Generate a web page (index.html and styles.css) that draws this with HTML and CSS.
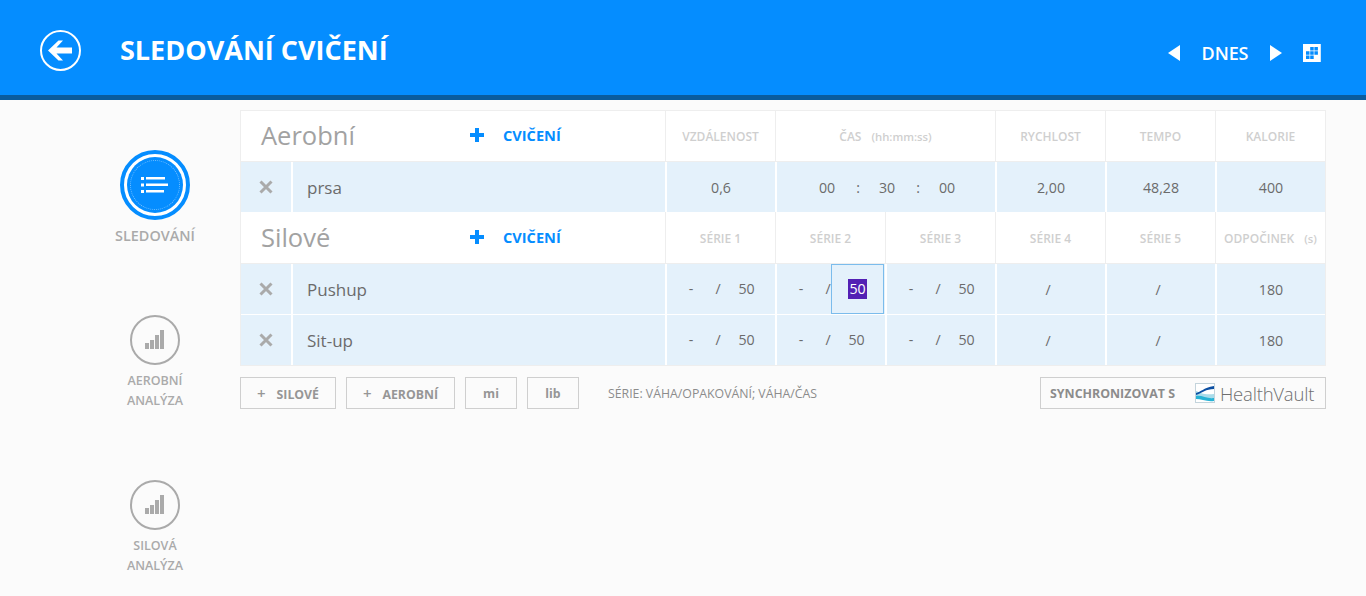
FILE: index.html
```html
<!DOCTYPE html>
<html lang="en">
<head>
  <meta charset="UTF-8" />
  <title>Sledování cvičení</title>
  <link rel="stylesheet" href="styles.css">
</head>
<body>
  <header class="topbar">
    <svg class="back-icon" width="41" height="41" viewBox="0 0 41 41">
      <circle cx="20.500" cy="20.500" r="19.500" fill="none" stroke="#fff" stroke-width="2"/>
      <path d="M8 20.500 L18.500 10.500 L23 10.500 L16.500 17.500 L32 17.500 L32 23.500 L16.500 23.500 L23 30.500 L18.500 30.500 Z" fill="#fff"/>
    </svg>
    <h1 class="title">SLEDOVÁNÍ CVIČENÍ</h1>
    <nav class="date-nav">
      <span class="tri tri-left"></span>
      <span class="today">DNES</span>
      <span class="tri tri-right"></span>
      <svg class="cal-icon" width="18" height="18" viewBox="0 0 18 18">
        <rect width="18" height="18" fill="#fff"/>
        <rect x="17" width="1" height="18" fill="#cfe6fb"/>
        <path d="M7.200 3h3.500v3.500H7.200zM11.400 3h3.500v3.500h-3.500zM3 7.200h3.500v3.500H3zM7.200 7.200h3.500v3.500H7.200zM11.400 7.200h3.500v3.500h-3.500zM3 11.400h3.500v3.500H3zM7.200 11.400h3.500v3.500H7.200z" fill="#058dff"/>
      </svg>
    </nav>
  </header>

  <div class="page">
    <aside class="sidebar">
      <div class="side-item side-active">
        <div class="active-ring">
          <div class="active-disc">
            <svg width="28" height="18" viewBox="0 0 28 18">
              <path d="M0 1h3v3H0zM0 7.500h3v3H0zM0 14h3v3H0z" fill="#fff"/>
              <path d="M5 1h19v2.500H5zM5 7.500h22V10H5zM5 14h18v2.500H5z" fill="#fff"/>
            </svg>
          </div>
        </div>
        <div class="side-label">SLEDOVÁNÍ</div>
      </div>
      <div class="side-item side-next">
        <div class="side-circle">
          <svg width="20" height="20" viewBox="0 0 20 20">
            <path d="M0 13h4v6H0zM5 10h4v9H5zM10 5h4v14h-4zM15 0h4v19h-4z" fill="#aaa"/>
          </svg>
        </div>
        <div class="side-label">AEROBNÍ<br>ANALÝZA</div>
      </div>
      <div class="side-item side-next">
        <div class="side-circle">
          <svg width="20" height="20" viewBox="0 0 20 20">
            <path d="M0 13h4v6H0zM5 10h4v9H5zM10 5h4v14h-4zM15 0h4v19h-4z" fill="#aaa"/>
          </svg>
        </div>
        <div class="side-label">SILOVÁ<br>ANALÝZA</div>
      </div>
    </aside>

    <main class="content">
      <div class="grid">
        <!-- aerobni -->
        <div class="head-name span2">
          <span class="section">Aerobní</span>
          <span class="add">
            <svg class="plus" width="14" height="14" viewBox="0 0 14 14"><path d="M5 0h4v5h5v4H9v5H5V9H0V5h5z" fill="#058dff"/></svg>CVIČENÍ
          </span>
        </div>
        <div class="th">VZDÁLENOST</div>
        <div class="th span2">ČAS <small class="th-note">(hh:mm:ss)</small></div>
        <div class="th">RYCHLOST</div>
        <div class="th">TEMPO</div>
        <div class="th">KALORIE</div>

        <div class="td td-x"><svg width="14" height="14" viewBox="0 0 14 14"><path d="M1.500 1.500l11 11M12.500 1.500l-11 11" stroke="#aaa" stroke-width="3" fill="none"/></svg></div>
        <div class="td td-name">prsa</div>
        <div class="td">0,6</div>
        <div class="td span2 time">
          <span>00</span><span>:</span><span>30</span><span>:</span><span>00</span>
        </div>
        <div class="td">2,00</div>
        <div class="td">48,28</div>
        <div class="td">400</div>

        <!-- silove -->
        <div class="head-name span2 lower">
          <span class="section">Silové</span>
          <span class="add">
            <svg class="plus" width="14" height="14" viewBox="0 0 14 14"><path d="M5 0h4v5h5v4H9v5H5V9H0V5h5z" fill="#058dff"/></svg>CVIČENÍ
          </span>
        </div>
        <div class="th lower">SÉRIE 1</div>
        <div class="th lower">SÉRIE 2</div>
        <div class="th lower">SÉRIE 3</div>
        <div class="th lower">SÉRIE 4</div>
        <div class="th lower">SÉRIE 5</div>
        <div class="th lower">ODPOČINEK <small class="th-note">(s)</small></div>

        <div class="td td-x split"><svg width="14" height="14" viewBox="0 0 14 14"><path d="M1.500 1.500l11 11M12.500 1.500l-11 11" stroke="#aaa" stroke-width="3" fill="none"/></svg></div>
        <div class="td td-name split">Pushup</div>
        <div class="td set split"><span>-</span><span>/</span><span class="val">50</span></div>
        <div class="td set split"><span>-</span><span>/</span><span class="focused"><span class="selected">50</span></span></div>
        <div class="td set split"><span>-</span><span>/</span><span class="val">50</span></div>
        <div class="td slash split">/</div>
        <div class="td slash split">/</div>
        <div class="td split">180</div>

        <div class="td td-x"><svg width="14" height="14" viewBox="0 0 14 14"><path d="M1.500 1.500l11 11M12.500 1.500l-11 11" stroke="#aaa" stroke-width="3" fill="none"/></svg></div>
        <div class="td td-name">Sit-up</div>
        <div class="td set"><span>-</span><span>/</span><span class="val">50</span></div>
        <div class="td set"><span>-</span><span>/</span><span class="val">50</span></div>
        <div class="td set"><span>-</span><span>/</span><span class="val">50</span></div>
        <div class="td slash">/</div>
        <div class="td slash">/</div>
        <div class="td">180</div>
      </div>

      <div class="toolbar">
        <button class="btn btn-silove"><span class="btn-plus">+</span>SILOVÉ</button>
        <button class="btn btn-aerobni"><span class="btn-plus">+</span>AEROBNÍ</button>
        <button class="btn btn-unit">mi</button>
        <button class="btn btn-unit">lib</button>
        <span class="hint">SÉRIE: VÁHA/OPAKOVÁNÍ; VÁHA/ČAS</span>
        <div class="sync">
          <span class="sync-label">SYNCHRONIZOVAT S</span>
          <svg class="hv-logo" width="20" height="20" viewBox="0 0 20 20">
            <rect x="0.500" y="0.500" width="19" height="19" fill="#fff" stroke="#c4d4dc"/>
            <path d="M1 8C6 10 9 12 19 11V15C10 17 6 14 1 13Z" fill="#a9dcea"/>
            <path d="M1 13C7 12 12 16 19 15V18C12 19 6 16 1 16Z" fill="#27b3d6"/>
            <path d="M1 10C6 9 8 5 19 3V6C11 6 7 10 1 12Z" fill="#0b4ea2"/>
          </svg>
          <span class="hv-name">HealthVault</span>
        </div>
      </div>
    </main>
  </div>
</body>
</html>
```

FILE: styles.css
```css
* {
  box-sizing: border-box;
}

html, body {
  height: 100%;
}

body {
  margin: 0;
  background: #fbfbfb;
  font-family: "Open Sans", "Noto Sans", "Liberation Sans", sans-serif;
  overflow: hidden;
}

.topbar {
  height: 100px;
  background: #058dff;
  border-bottom: 5px solid #0a5c9e;
  display: flex;
  align-items: center;
  padding: 6px 45px 0 40px;
  color: #fff;
}

.back-icon {
  margin-right: 39px;
}

.title {
  margin: -2px 0 0;
  font-size: 27px;
  font-weight: 700;
}

.date-nav {
  margin-left: auto;
  display: flex;
  align-items: center;
  margin-top: 4px;
}

.tri {
  width: 0;
  height: 0;
  border-top: 8px solid transparent;
  border-bottom: 8px solid transparent;
}

.tri-left {
  border-right: 12px solid #fff;
}

.tri-right {
  border-left: 12px solid #fff;
}

.today {
  width: 90px;
  text-align: center;
  font-size: 18px;
  font-weight: 600;
  letter-spacing: -0.1px;
}

.cal-icon {
  margin-left: 21px;
}

.page {
  display: flex;
}

.sidebar {
  width: 240px;
  flex: none;
  padding-left: 70px;
  text-align: center;
}

.side-item {
  display: flex;
  flex-direction: column;
  align-items: center;
}

.side-active {
  margin-top: 50px;
}

.side-next {
  margin-top: 69px;
}

.active-ring {
  width: 70px;
  height: 70px;
  border-radius: 50%;
  border: 4px solid #058dff;
  padding: 3px;
  background: #fff;
}

.active-disc {
  width: 56px;
  height: 56px;
  border-radius: 50%;
  background: #058dff;
  display: flex;
  align-items: center;
  justify-content: center;
  position: relative;
}

.active-disc::after {
  content: "";
  position: absolute;
  inset: 3px;
  border-radius: 50%;
  border: 1px dotted rgba(255, 255, 255, 0.45);
}

.side-circle {
  width: 50px;
  height: 50px;
  border-radius: 50%;
  border: 2px solid #aaa;
  background: #fbfbfb;
  display: flex;
  align-items: center;
  justify-content: center;
}

.side-label {
  color: #aaa;
  font-size: 12.500px;
  font-weight: 600;
  line-height: 20px;
  margin-top: 6px;
}

.side-active .side-label {
  font-size: 14.400px;
}

.content {
  width: 1086px;
  margin-top: 10px;
}

.grid {
  display: grid;
  grid-template-columns: 50px 374px repeat(6, 110px);
  grid-template-rows: 51px 50px 52px 51px 50px;
  border: 1px solid #eee;
  background: #fff;
}

.span2 {
  grid-column: span 2;
}

.head-name {
  display: flex;
  align-items: center;
  border-bottom: 1px solid #eee;
}

.section {
  width: 229px;
  padding-left: 20px;
  font-size: 25.500px;
  color: #a2a2a2;
  margin-top: -2px;
}

.add {
  color: #058dff;
  font-size: 14.600px;
  font-weight: 700;
  display: flex;
  align-items: center;
  margin-top: -2px;
}

.lower .add {
  margin-top: -1px;
}

.plus {
  margin-right: 19px;
}

.th {
  display: flex;
  align-items: center;
  justify-content: center;
  gap: 10px;
  color: #cfcfcf;
  font-size: 12px;
  font-weight: 600;
  border-left: 1px solid #eee;
  border-bottom: 1px solid #eee;
}

.th.lower {
  padding-top: 2px;
}

.th-note {
  font-size: 11.300px;
}

.td {
  display: flex;
  align-items: center;
  justify-content: center;
  background: #e4f1fb;
  color: #6b6b6b;
  font-size: 14.200px;
  border-left: 2px solid #fff;
}

.split {
  border-bottom: 1px solid #fff;
}

.td-x {
  border-left: 0;
}

.td-name {
  justify-content: flex-start;
  padding-left: 14px;
  font-size: 17px;
}

.slash {
  padding-right: 6px;
}

.time {
  display: grid;
  grid-template-columns: 40px 22px 36px 26px 32px;
  justify-content: start;
  padding-left: 30px;
  justify-items: center;
}

.set {
  display: grid;
  grid-template-columns: 48px 6px 53px;
  justify-content: start;
  justify-items: center;
  align-items: center;
  height: 100%;
}

.set > span {
  line-height: 1;
}

.set > .val {
  padding-right: 2px;
}

.set > .focused {
  width: 53px;
  height: 50px;
  border: 1px solid #7bbcec;
  display: flex;
  align-items: center;
  justify-content: center;
}

.selected {
  background: #5320b4;
  color: #fff;
  padding: 0 1px;
  line-height: 20px;
}

.toolbar {
  display: flex;
  align-items: center;
  margin-top: 11px;
  height: 32px;
}

.btn {
  height: 32px;
  border: 1px solid #cfcfcf;
  background: #fbfbfb;
  color: #969696;
  font-family: inherit;
  font-size: 12.300px;
  font-weight: 700;
  padding: 0;
  margin-right: 10px;
}

.btn-plus {
  font-size: 15px;
  margin-right: 11px;
  font-weight: 600;
}

.btn-silove {
  width: 96px;
}

.btn-aerobni {
  width: 109px;
}

.btn-unit {
  width: 52px;
}

.hint {
  margin-left: 19px;
  color: #8c8c8c;
  font-size: 12.300px;
}

.sync {
  margin-left: auto;
  width: 286px;
  height: 32px;
  border: 1px solid #cfcfcf;
  display: flex;
  align-items: center;
  padding-left: 9px;
}

.sync-label {
  width: 145px;
  color: #8c8c8c;
  font-size: 12.400px;
  font-weight: 700;
  white-space: nowrap;
}

.hv-name {
  margin-left: 5px;
  font-size: 18.500px;
  font-weight: 300;
  color: #6f6f6f;
  letter-spacing: -0.2px;
}
```
